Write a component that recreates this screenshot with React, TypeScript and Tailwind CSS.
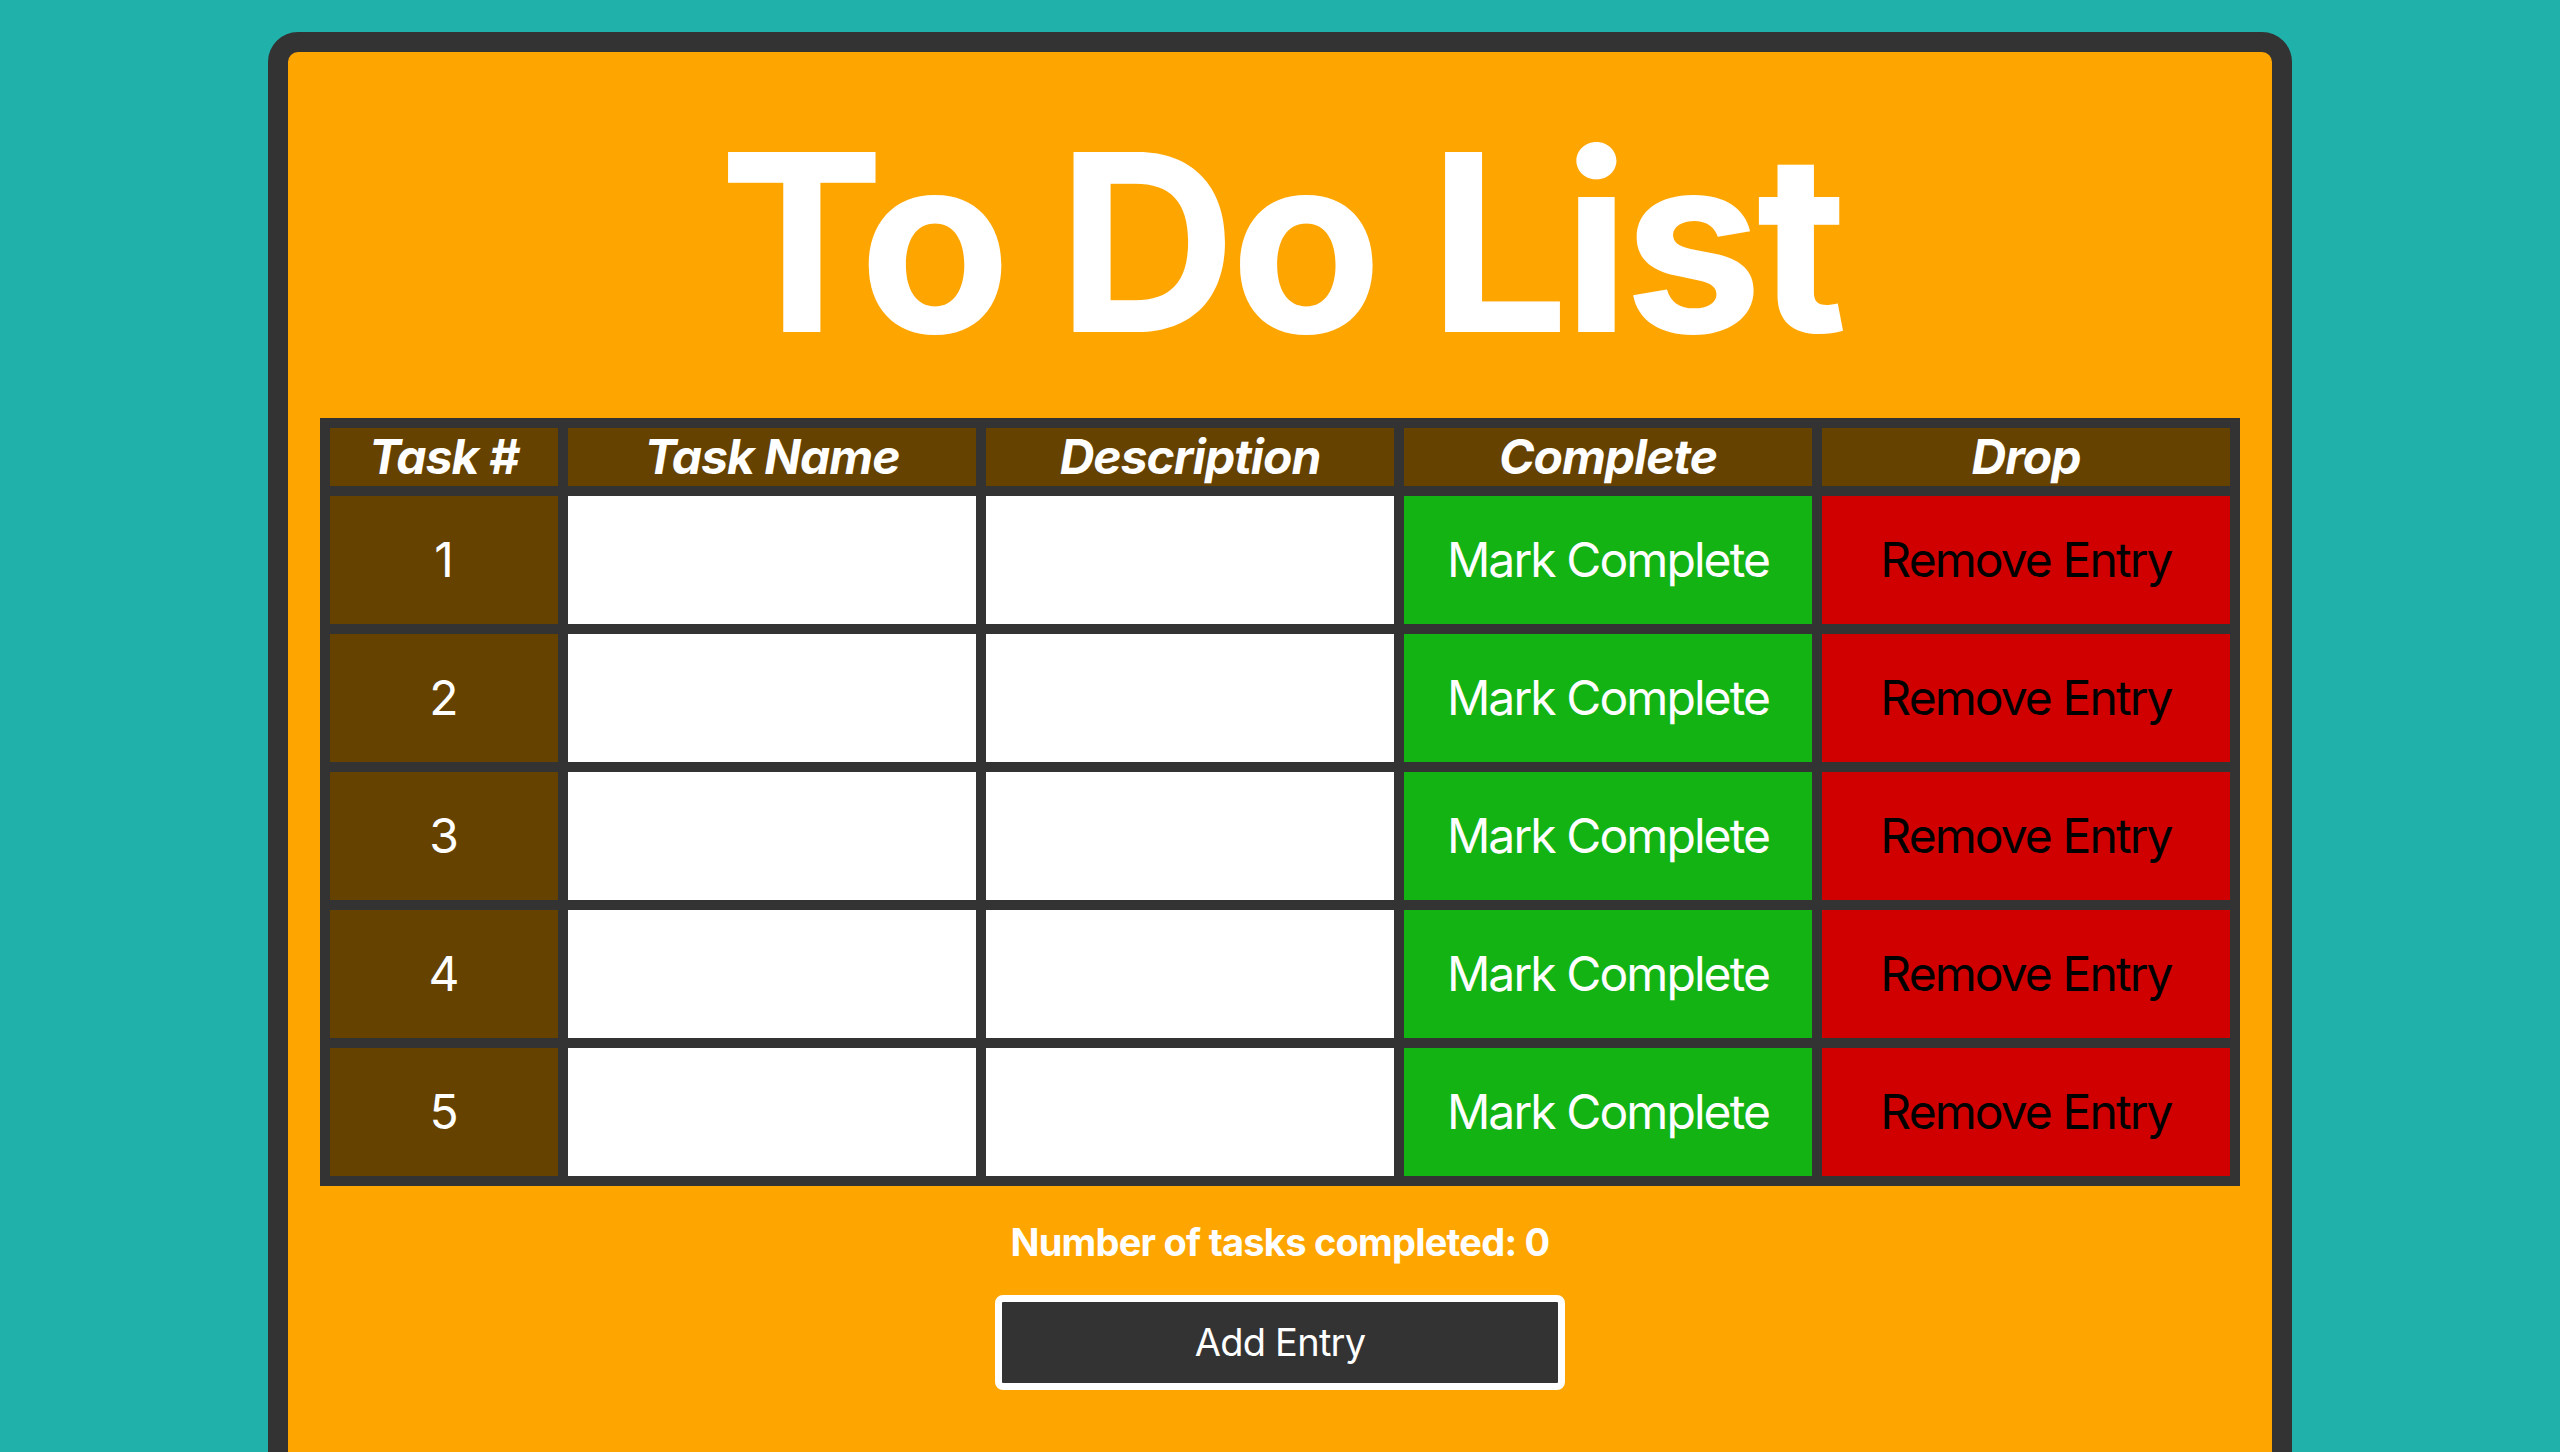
import React from 'react'

const rows = [1, 2, 3, 4, 5]

function App() {
  return (
    <div className="min-h-screen bg-[#20b2aa] pt-[32px] font-['Inter','Liberation_Sans',sans-serif]">
      <div className="mx-auto w-[2024px] rounded-[30px] border-[20px] border-[#333333] bg-[#ffa500] px-[32px] pt-[66px] pb-[120px]">
        {/* Title */}
        <h1 className="h-[248px] text-center text-[248px] font-bold leading-none tracking-[-0.025em] text-white">
          To Do List
        </h1>

        {/* Task table */}
        <table className="mt-[52px] w-[1920px] table-fixed border-separate border-spacing-[10px] bg-[#333333]">
          <thead>
            <tr>
              <th className="w-[228px] bg-[#664200] text-[48px] font-bold italic leading-[58px] tracking-[-0.02em] text-white">Task #</th>
              <th className="w-[408px] bg-[#664200] text-[48px] font-bold italic leading-[58px] tracking-[-0.02em] text-white">Task Name</th>
              <th className="w-[408px] bg-[#664200] text-[48px] font-bold italic leading-[58px] tracking-[-0.02em] text-white">Description</th>
              <th className="w-[408px] bg-[#664200] text-[48px] font-bold italic leading-[58px] tracking-[-0.02em] text-white">Complete</th>
              <th className="w-[408px] bg-[#664200] text-[48px] font-bold italic leading-[58px] tracking-[-0.02em] text-white">Drop</th>
            </tr>
          </thead>
          <tbody>
            {rows.map((n) => (
              <tr key={n}>
                <td className="h-[128px] bg-[#664200] text-center text-[48px] text-white">{n}</td>
                <td className="h-[128px] bg-white"></td>
                <td className="h-[128px] bg-white"></td>
                <td className="h-[128px] bg-[#14b314] text-center text-[48px] tracking-[-0.04em] text-white">
                  Mark Complete
                </td>
                <td className="h-[128px] bg-[#d00000] text-center text-[48px] tracking-[-0.04em] text-black">
                  Remove Entry
                </td>
              </tr>
            ))}
          </tbody>
        </table>

        <p className="mt-[33px] text-center text-[38px] font-bold leading-[46px] tracking-[-0.02em] text-white">
          Number of tasks completed: 0
        </p>

        <div className="mt-[30px] flex justify-center">
          <button className="h-[95px] w-[570px] rounded-[8px] border-[7px] border-white bg-[#333333] text-[38px] tracking-[-0.02em] text-white">
            Add Entry
          </button>
        </div>
      </div>
    </div>
  )
}

export default App
